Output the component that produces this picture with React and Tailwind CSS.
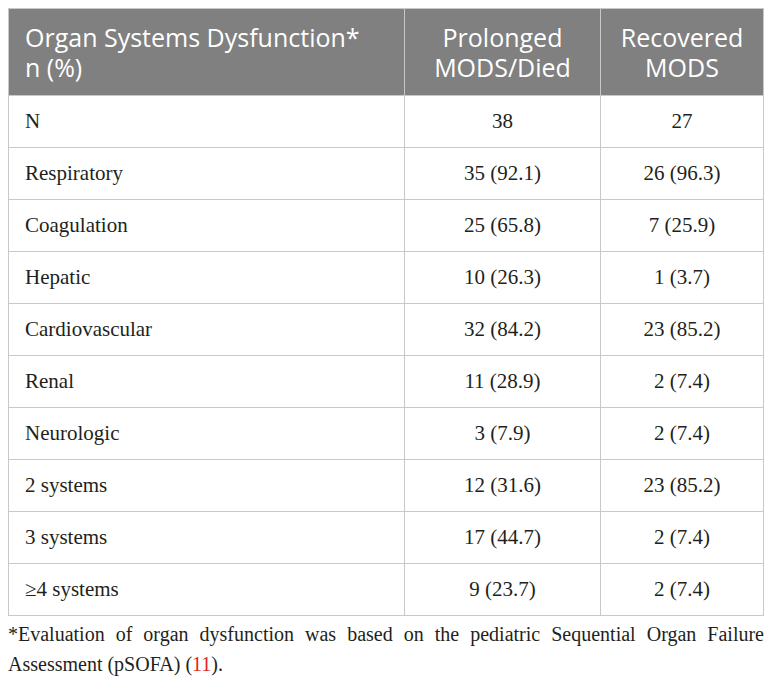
export default function App() {
  const rows = [
    ["N", "38", "27"],
    ["Respiratory", "35 (92.1)", "26 (96.3)"],
    ["Coagulation", "25 (65.8)", "7 (25.9)"],
    ["Hepatic", "10 (26.3)", "1 (3.7)"],
    ["Cardiovascular", "32 (84.2)", "23 (85.2)"],
    ["Renal", "11 (28.9)", "2 (7.4)"],
    ["Neurologic", "3 (7.9)", "2 (7.4)"],
    ["2 systems", "12 (31.6)", "23 (85.2)"],
    ["3 systems", "17 (44.7)", "2 (7.4)"],
    ["\u22654 systems", "9 (23.7)", "2 (7.4)"],
  ];

  return (
    <div className="bg-white w-[772px] h-[682px] pt-2 px-2">
      <table className="w-[756px] border-collapse border border-[#c8c8c8] text-[#231f20]">
        <thead>
          <tr className="bg-[#808080] text-white h-[87px] font-['Open_Sans',sans-serif] text-[25px] leading-[30px]">
            <th className="w-[396px] border border-[#c8c8c8] px-4 text-left font-normal">
              Organ Systems Dysfunction*
              <br />n (%)
            </th>
            <th className="w-[196px] border border-[#c8c8c8] px-1 text-center font-normal">
              Prolonged
              <br />
              MODS/Died
            </th>
            <th className="border border-[#c8c8c8] px-1 text-center font-normal">
              Recovered
              <br />
              MODS
            </th>
          </tr>
        </thead>
        <tbody className="font-['Liberation_Serif',serif] text-[21px]">
          {rows.map((r) => (
            <tr key={r[0]} className="h-[52px]">
              <td className="border border-[#c8c8c8] px-4">{r[0]}</td>
              <td className="border border-[#c8c8c8] text-center">{r[1]}</td>
              <td className="border border-[#c8c8c8] text-center">{r[2]}</td>
            </tr>
          ))}
        </tbody>
      </table>
      <p className="mt-[3px] w-[756px] text-justify font-['Liberation_Serif',serif] text-[20px] leading-[30px] text-[#231f20]">
        *Evaluation of organ dysfunction was based on the pediatric Sequential Organ Failure Assessment (pSOFA) (<span className="text-[#e2231a]">11</span>).
      </p>
    </div>
  );
}
